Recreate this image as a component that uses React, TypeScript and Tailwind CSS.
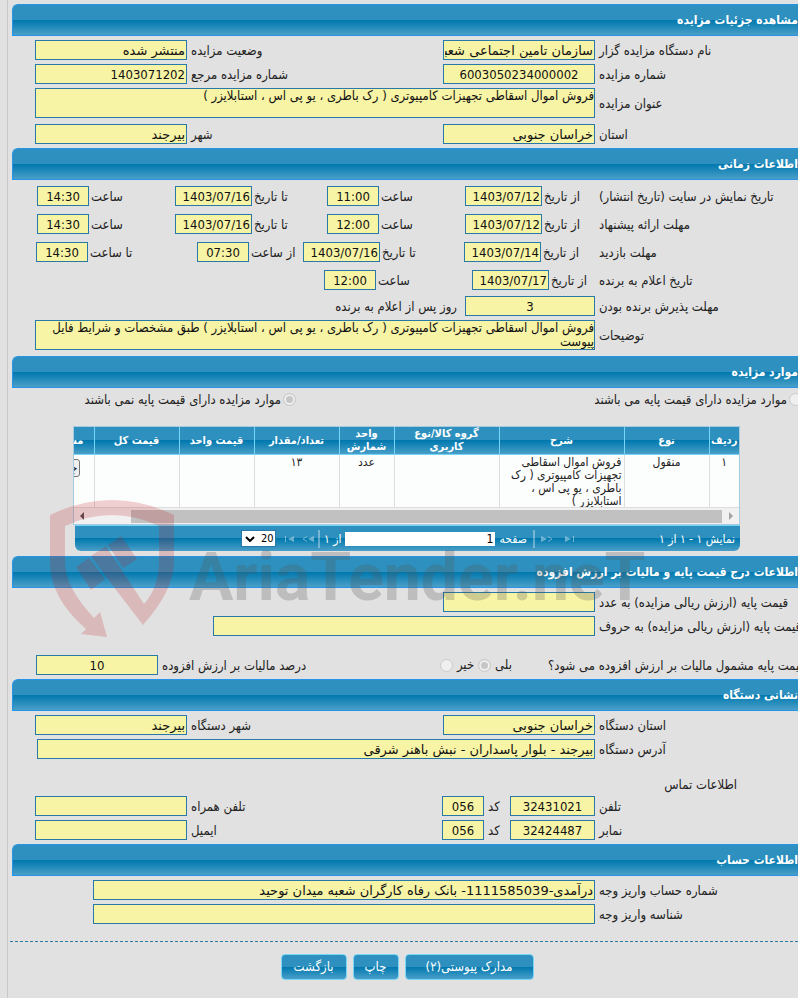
import type { ReactNode } from "react";

const BAR = "bg-[linear-gradient(#2e90be_0%,#2e90be_50%,#0078ae_50%,#4a9fc8_100%)]";
const BOX =
  "h-5 min-w-0 rounded-none border border-[#2879a8] bg-[#f7f4a5] px-px text-[13px] leading-4 text-[#111] outline-none";
const FA = "font-['DejaVu_Sans',sans-serif]";

function Heading({ children }: { children: ReactNode }) {
  return (
    <h2
      className={`ml-3 flex h-8 items-center rounded-tl-md border border-r-0 border-[#2694e8] text-[12px] font-bold whitespace-nowrap text-white ${BAR}`}
    >
      {children}
    </h2>
  );
}

function Label({ id, children }: { id?: string; children: ReactNode }) {
  return (
    <label htmlFor={id} className="block min-w-0 pt-0.5 text-end text-[13px] leading-4 whitespace-nowrap">
      {children}
    </label>
  );
}

function Box({ id, value, className }: { id: string; value?: string; className: string }) {
  return <input id={id} type="text" readOnly defaultValue={value ?? ""} className={`${BOX} ${className}`} />;
}

function Pair(p: {
  id: string;
  label: string;
  value?: string;
  id2: string;
  label2: string;
  value2?: string;
  numeric?: boolean;
}) {
  return (
    <div className="flex items-center gap-1 pl-[35px]">
      <div className="w-[199px] shrink-0">
        <Label id={p.id}>{p.label}</Label>
      </div>
      <Box id={p.id} value={p.value} className={`w-[152px] shrink-0 ${p.numeric ? "text-center" : FA}`} />
      <div className="flex-1">
        <Label id={p.id2}>{p.label2}</Label>
      </div>
      <Box id={p.id2} value={p.value2} className={`w-[152px] shrink-0 ${p.numeric ? "" : FA}`} />
    </div>
  );
}

function Wide({ id, label, value, end }: { id: string; label: string; value?: string; end: string }) {
  return (
    <div className={`flex items-center gap-1 ${end}`}>
      <div className="-mr-1 w-[203px] shrink-0">
        <Label id={id}>{label}</Label>
      </div>
      <Box id={id} value={value} className={`flex-1 ${FA}`} />
    </div>
  );
}

function Area({ id, label, value }: { id: string; label: string; value: string }) {
  return (
    <div className="flex items-center gap-1 pl-[35px]">
      <div className="w-[199px] shrink-0">
        <Label id={id}>{label}</Label>
      </div>
      <textarea
        id={id}
        readOnly
        defaultValue={value}
        className="h-[30px] min-w-0 flex-1 resize-none overflow-hidden border border-[#2879a8] bg-[#f7f4a5] p-0 text-[13px] leading-[14px] text-[#111] outline-none"
      />
    </div>
  );
}

function Slot({ id, label, value, date }: { id: string; label: string; value: string; date?: boolean }) {
  return (
    <div className="flex items-center justify-end gap-0.5">
      <Label id={id}>{label}</Label>
      <Box id={id} value={value} className={`shrink-0 ${date ? "w-[77px]" : "w-[52px] text-center"}`} />
    </div>
  );
}

function Phone({ id, label, value, label2 }: { id: string; label: string; value: string; label2: string }) {
  return (
    <div className="flex items-center gap-1 pl-[35px]">
      <div className="w-[199px] shrink-0">
        <Label id={id}>{label}</Label>
      </div>
      <Box id={id} value={value} className="w-[85px] shrink-0 text-center" />
      <div className="flex w-16 shrink-0 items-center justify-end gap-1">
        <Label id={`${id}-code`}>کد</Label>
        <Box id={`${id}-code`} value="056" className="w-[42px] shrink-0 text-center" />
      </div>
      <div className="flex-1">
        <Label id={`${id}-2`}>{label2}</Label>
      </div>
      <Box id={`${id}-2`} className="w-[152px] shrink-0" />
    </div>
  );
}

function Radio({ id, name, checked }: { id: string; name: string; checked?: boolean }) {
  return (
    <input
      id={id}
      name={name}
      type="radio"
      disabled
      defaultChecked={checked}
      className="size-[13px] shrink-0 appearance-none rounded-full border border-[#cbcbcb] bg-[#efefef] checked:bg-[#c6c6c6] checked:shadow-[inset_0_0_0_2px_#efefef]"
    />
  );
}

const COLS = [
  { w: "w-[30px]", t: "ردیف" },
  { w: "w-[85px]", t: "نوع" },
  { w: "w-[125px]", t: "شرح" },
  { w: "w-[105px] px-2", t: "گروه کالا/نوع کاربری" },
  { w: "w-[55px]", t: "واحد شمارش" },
  { w: "w-[85px]", t: "تعداد/مقدار" },
  { w: "w-[75px]", t: "قیمت واحد" },
  { w: "w-[85px]", t: "قیمت کل" },
];
const CELLS = ["۱", "منقول", "فروش اموال اسقاطی تجهیزات کامپیوتری ( رک باطری ، یو پی اس ، استابلایزر )", "", "عدد", "۱۳", "", ""];

function Grid() {
  return (
    <div className="mr-[58px] ml-[73px]">
      <div className="overflow-hidden border border-[#a6cbe0] bg-[#fcfdfd]">
        <div className="h-20 overflow-hidden">
          <table className="w-[730px] table-fixed border-collapse text-[11px] leading-[13px]">
            <thead>
              <tr className={`h-[27px] text-white ${BAR}`}>
                {COLS.map((c) => (
                  <th key={c.t} className={`${c.w} overflow-hidden border-b border-l border-[#77d5f7] py-0 text-center font-bold`}>
                    {c.t}
                  </th>
                ))}
                <th className="w-[85px] border-b border-[#77d5f7] py-0 pr-2.5 text-start font-bold">مشاهده</th>
              </tr>
            </thead>
            <tbody>
              <tr className="h-[53px] align-top text-[12px] leading-[13px] text-[#222]">
                {CELLS.map((c, i) => (
                  <td key={i} className={`border-b border-l border-[#ddd] px-0.5 py-px ${i === 2 ? "text-start" : "text-center"}`}>
                    {c}
                  </td>
                ))}
                <td className="p-0 pt-1 pr-3.5 text-start">
                  <button type="button" className="h-[18px] rounded-[3px] border border-[#767676] bg-[#efefef] px-px text-[12px] leading-4">
                    جزئیات
                  </button>
                </td>
              </tr>
            </tbody>
          </table>
        </div>
        <div className="flex h-[17px] items-center justify-between border-t border-[#ddd] bg-[#f1f1f1] px-1.5">
          <svg viewBox="0 0 4 8" className="h-2 w-1 fill-[#a3a3a3]"><path d="M0 0l4 4-4 4z" /></svg>
          <div className="mr-[7px] ml-[47px] h-[13px] flex-1 bg-[#c1c1c1]" />
          <svg viewBox="0 0 4 8" className="h-2 w-1 fill-[#505050]"><path d="M4 0L0 4l4 4z" /></svg>
        </div>
      </div>
      <div className={`ml-0.5 flex h-[26px] items-center rounded-b-md border-t border-[#77d5f7] pr-[5px] text-[12px] whitespace-nowrap text-white ${BAR}`}>
        <span className="flex-1">نمایش ۱ - ۱ از ۱</span>
        <div className="flex items-center gap-1">
          <button type="button" aria-label="اولین" className="ml-2 opacity-40"><svg viewBox="0 0 10 6" className="h-1.5 w-2.5 fill-white"><path d="M0 0l6 3-6 3zM8 0h1v6H8z" /></svg></button>
          <button type="button" aria-label="قبلی" className="opacity-40"><svg viewBox="0 0 12 6" className="h-1.5 w-3 fill-white stroke-white"><path d="M0 0l6 3-6 3z" stroke="none" /><path d="M7 0.5l4 2.5-4 2.5" fill="none" /></svg></button>
          <i className="mx-0.5 h-[18px] w-0.5 bg-white/35" />
          <label htmlFor="page">صفحه</label>
          <input id="page" readOnly defaultValue="1" className="h-3.5 w-[150px] bg-white px-0.5 text-[12px] text-black" />
          <span>از ۱</span>
          <i className="h-[18px] w-0.5 bg-white/35" />
          <button type="button" aria-label="بعدی" className="opacity-40"><svg viewBox="0 0 12 6" className="h-1.5 w-3 fill-white stroke-white"><path d="M12 0L6 3l6 3z" stroke="none" /><path d="M5 0.5L1 3l4 2.5" fill="none" /></svg></button>
          <button type="button" aria-label="آخرین" className="mr-1 opacity-40"><svg viewBox="0 0 10 6" className="h-1.5 w-2.5 fill-white"><path d="M10 0L4 3l6 3zM1 0h1v6H1z" /></svg></button>
        </div>
        <div dir="ltr" className="relative mr-2 ml-[166px] shrink-0">
          <select aria-label="تعداد سطر" className="block h-[17px] w-[35px] appearance-none border border-[#2879a8] bg-white pl-[19px] text-[11px] leading-[15px] text-black">
            <option>20</option>
          </select>
          <svg viewBox="0 0 10 6" className="pointer-events-none absolute top-1.5 left-1 h-1.5 w-2.5 fill-none stroke-black stroke-2"><path d="M1 1l4 4 4-4" /></svg>
        </div>
      </div>
    </div>
  );
}

function Watermark() {
  return (
    <svg aria-hidden="true" viewBox="0 0 610 150" className="pointer-events-none absolute top-[495px] left-[45px] h-[150px] w-[610px] [direction:ltr]">
      <g fill="#c01820" fillOpacity="0.2">
        <path d="M5 20Q67 -10 129 20V67Q129 95 98 130L62 83L76 74L99 109Q114 92 114 67V31Q67 9 20 31V67Q20 92 49 123L55 117L62 142L36 139L41 134Q5 103 5 67Z" />
        <path d="M31 72L44 63L60 84L46 95ZM46 61L61 51L76 74L62 83ZM63 50L76 41L92 64L78 73Z" />
      </g>
      <text x="144" y="105" fontSize="66" fontWeight="700" fill="#555" fillOpacity="0.25" className="font-['Roboto',sans-serif]">AriaTender.neT</text>
    </svg>
  );
}

const ACTION = `h-[26px] rounded border border-[#77d5f7] text-[13px] leading-6 text-white ${BAR}`;

export default function App() {
  return (
    <main dir="rtl" className="relative min-h-screen overflow-hidden bg-[#e1e1e1] pt-1 font-['DejaVu_Sans_Condensed','DejaVu_Sans',sans-serif] text-[#222]">
      <div aria-hidden="true" className="absolute inset-y-0 left-[7px] w-px bg-[#c8c8c8]" />

      <Heading>مشاهده جزئیات مزایده</Heading>
      <section className="flex flex-col gap-1 py-1">
        <Pair id="org" label="نام دستگاه مزایده گزار" value="سازمان تامین اجتماعی شعبه بیرجند" id2="state" label2="وضعیت مزایده" value2="منتشر شده" />
        <Pair id="num" label="شماره مزایده" value="6003050234000002" numeric id2="ref" label2="شماره مزایده مرجع" value2="1403071202" />
        <Area id="title" label="عنوان مزایده" value="فروش اموال اسقاطی تجهیزات کامپیوتری ( رک باطری ، یو پی اس ، استابلایزر )" />
        <div className="pt-0.5">
          <Pair id="prov" label="استان" value="خراسان جنوبی" id2="city" label2="شهر" value2="بیرجند" />
        </div>
      </section>

      <Heading>اطلاعات زمانی</Heading>
      <section className="flex flex-col pt-1.5 pb-1.5">
        <div className="flex flex-col gap-2">
          <div className="grid grid-cols-[199px_134fr_138fr_152fr_138fr] items-center pl-[37px]">
            <Label>تاریخ نمایش در سایت (تاریخ انتشار)</Label>
            <Slot id="a1" label="از تاریخ" value="1403/07/12" date />
            <Slot id="a2" label="ساعت" value="11:00" />
            <Slot id="a3" label="تا تاریخ" value="1403/07/16" date />
            <Slot id="a4" label="ساعت" value="14:30" />
          </div>
          <div className="grid grid-cols-[199px_134fr_138fr_152fr_138fr] items-center pl-[37px]">
            <Label>مهلت ارائه پیشنهاد</Label>
            <Slot id="b1" label="از تاریخ" value="1403/07/12" date />
            <Slot id="b2" label="ساعت" value="12:00" />
            <Slot id="b3" label="تا تاریخ" value="1403/07/16" date />
            <Slot id="b4" label="ساعت" value="14:30" />
          </div>
          <div className="grid grid-cols-[199px_135fr_161fr_106fr_161fr] items-center pl-9">
            <Label>مهلت بازدید</Label>
            <Slot id="c1" label="از تاریخ" value="1403/07/14" date />
            <Slot id="c2" label="تا تاریخ" value="1403/07/16" date />
            <Slot id="c3" label="از ساعت" value="07:30" />
            <Slot id="c4" label="تا ساعت" value="14:30" />
          </div>
          <div className="grid grid-cols-[199px_127fr_148fr_288fr] items-center pl-9">
            <Label>تاریخ اعلام به برنده</Label>
            <Slot id="d1" label="از تاریخ" value="1403/07/17" date />
            <Slot id="d2" label="ساعت" value="12:00" />
          </div>
        </div>
        <div className="flex items-center gap-1 pt-1.5 pb-1">
          <div className="w-[199px] shrink-0">
            <Label id="accept">مهلت پذیرش برنده بودن</Label>
          </div>
          <Box id="accept" value="3" className="w-[130px] text-center" />
          <span className="pt-0.5 pr-1 text-[13px] leading-4">روز پس از اعلام به برنده</span>
        </div>
        <Area id="notes" label="توضیحات" value="فروش اموال اسقاطی تجهیزات کامپیوتری ( رک باطری ، یو پی اس ، استابلایزر ) طبق مشخصات و شرایط فایل پیوست" />
      </section>

      <Heading>موارد مزایده</Heading>
      <section className="pb-[5px]">
        <div className="mb-[15px] flex h-[23px] items-center text-[13px]">
          <div className="-mr-1 flex w-[506px] items-center gap-0.5">
            <Radio id="base-yes" name="base" />
            <label htmlFor="base-yes">موارد مزایده دارای قیمت پایه می باشند</label>
          </div>
          <div className="flex items-center gap-0.5">
            <Radio id="base-no" name="base" checked />
            <label htmlFor="base-no">موارد مزایده دارای قیمت پایه نمی باشند</label>
          </div>
        </div>
        <Grid />
      </section>

      <Heading>اطلاعات درج قیمت پایه و مالیات بر ارزش افزوده</Heading>
      <section className="flex flex-col gap-1 py-1">
        <div className="flex items-center gap-1">
          <div className="w-[199px] shrink-0">
            <Label id="price-n">قیمت پایه (ارزش ریالی مزایده) به عدد</Label>
          </div>
          <Box id="price-n" className="w-[152px]" />
        </div>
        <Wide id="price-t" label="قیمت پایه (ارزش ریالی مزایده) به حروف" end="pl-[213px]" />
        <div className="flex items-center gap-1 pt-[15px] pl-9">
          <div className="-mr-2 w-[258px] shrink-0">
            <Label>قیمت پایه مشمول مالیات بر ارزش افزوده می شود؟</Label>
          </div>
          <div className="mr-8 flex items-center gap-1 text-[13px] leading-4">
            <label htmlFor="vat-yes">بلی</label>
            <Radio id="vat-yes" name="vat" checked />
            <label htmlFor="vat-no">خیر</label>
            <Radio id="vat-no" name="vat" />
          </div>
          <div className="flex-1">
            <Label id="vat">درصد مالیات بر ارزش افزوده</Label>
          </div>
          <Box id="vat" value="10" className="w-[122px] shrink-0 text-center" />
        </div>
      </section>

      <Heading>نشانی دستگاه</Heading>
      <section className="flex flex-col gap-1 py-1">
        <Pair id="org-prov" label="استان دستگاه" value="خراسان جنوبی" id2="org-city" label2="شهر دستگاه" value2="بیرجند" />
        <Wide id="addr" label="آدرس دستگاه" value="بیرجند - بلوار پاسداران - نبش باهنر شرقی" end="pl-[37px]" />
        <h3 className="pt-[15px] pr-[61px] text-[13px] leading-[14px]">اطلاعات تماس</h3>
        <Phone id="tel" label="تلفن" value="32431021" label2="تلفن همراه" />
        <Phone id="fax" label="نمابر" value="32424487" label2="ایمیل" />
      </section>

      <Heading>اطلاعات حساب</Heading>
      <section className="flex flex-col gap-1 py-1">
        <Wide id="acc" label="شماره حساب واریز وجه" value="درآمدی-1111585039- بانک رفاه کارگران شعبه میدان توحید" end="pl-[93px]" />
        <Wide id="payid" label="شناسه واریز وجه" end="pl-[93px]" />
      </section>

      <div className="mt-[13px] ml-2.5 border-t border-dashed border-[#2879a8]" />
      <div className="flex justify-center gap-1.5 pt-3 pl-4">
        <button type="button" className={`w-[129px] ${ACTION}`}>مدارک پیوستی(۲)</button>
        <button type="button" className={`w-[46px] ${ACTION}`}>چاپ</button>
        <button type="button" className={`w-[66px] ${ACTION}`}>بازگشت</button>
      </div>
      <Watermark />
    </main>
  );
}
